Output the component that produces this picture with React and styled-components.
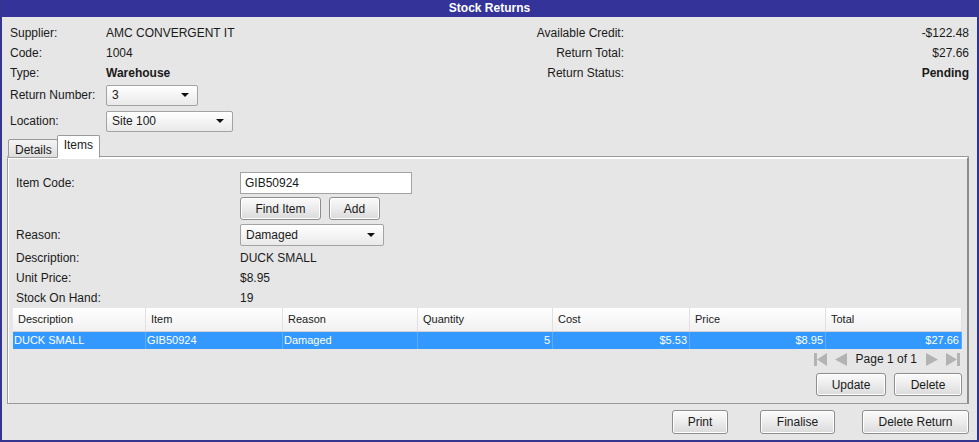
import React from "react";
import styled, { createGlobalStyle } from "styled-components";

const Global = createGlobalStyle`
  html, body { margin: 0; padding: 0; background: #e6e6e6; }
  body { font-family: "Liberation Sans", Arial, sans-serif; font-size: 12px; color: #1a1a1a; }
  * { box-sizing: border-box; }
`;

const Frame = styled.div`
  width: 979px;
  height: 442px;
  background: #e6e6e6;
  border-left: 2px solid #35358f;
  border-right: 2px solid #35358f;
  border-bottom: 2px solid #35358f;
  display: flex;
  flex-direction: column;
`;

const TitleBar = styled.div`
  height: 17px;
  background: #333399;
  color: #fff;
  font-weight: bold;
  font-size: 12px;
  line-height: 17px;
  text-align: center;
`;

const Body = styled.div`
  flex: 1;
  display: flex;
  flex-direction: column;
  padding: 6px 8px 0 5px;
`;

const Header = styled.div`
  display: flex;
  justify-content: space-between;
`;

const LeftInfo = styled.div`
  display: grid;
  grid-template-columns: 96px auto;
  grid-auto-rows: 20px;
  align-items: center;
  padding-left: 3px;
`;

const RightInfo = styled.div`
  display: grid;
  grid-template-columns: auto 345px;
  grid-auto-rows: 20px;
  align-items: center;
  text-align: right;
`;

const Label = styled.span`
  white-space: nowrap;
`;

const Value = styled.span`
  font-weight: ${(p) => (p.$bold ? "bold" : "normal")};
  white-space: nowrap;
`;

const SelectRow = styled.div`
  display: grid;
  grid-template-columns: 96px auto;
  align-items: center;
  height: 22px;
  padding-left: 3px;
  margin-top: ${(p) => p.$mt || 0}px;
`;

const SelectBox = styled.div`
  width: ${(p) => p.$w}px;
  height: ${(p) => p.$h || 21}px;
  border: 1px solid #a3a3a3;
  border-radius: 2px;
  background: linear-gradient(#ffffff, #e9e9e9);
  display: flex;
  align-items: center;
  justify-content: space-between;
  padding: 0 8px 0 5px;
  font-size: 12px;
`;

const Caret = styled.span`
  width: 0;
  height: 0;
  border-left: 4px solid transparent;
  border-right: 4px solid transparent;
  border-top: 4px solid #111;
`;

const Tabs = styled.div`
  display: flex;
  align-items: flex-end;
  height: 23px;
  margin-top: 3px;
  padding-left: 1px;
  position: relative;
  z-index: 1;
`;

const Tab = styled.div`
  height: ${(p) => (p.$active ? 23 : 19)}px;
  padding: ${(p) => (p.$active ? "2px 6px 0 6px" : "3px 5px 0 6px")};
  border: 1px solid #9a9a9a;
  border-bottom: ${(p) => (p.$active ? "1px solid #fff" : "1px solid #9a9a9a")};
  border-radius: 2px 2px 0 0;
  background: ${(p) => (p.$active ? "#ffffff" : "linear-gradient(#f4f4f4, #dedede)")};
  margin-right: ${(p) => (p.$active ? 0 : -1)}px;
  font-size: 12px;
  line-height: 15px;
`;

const Panel = styled.div`
  margin-top: -1px;
  height: 247px;
  border: 1px solid #9a9a9a;
  border-top-color: #ffffff;
  box-shadow: inset 1px 1px 0 #ffffff, 0 -1px 0 #9a9a9a;
  border-right: 2px solid #8c8c8c;
  display: flex;
  flex-direction: column;
  padding: 14px 6px 0 5px;
`;

const FormGrid = styled.div`
  display: grid;
  grid-template-columns: 224px auto;
  align-items: center;
  padding-left: 3px;
`;

const FormLabel = styled.span`
  height: ${(p) => p.$h || 20}px;
  line-height: ${(p) => p.$h || 20}px;
  margin-top: ${(p) => p.$mt || 0}px;
`;

const FormValue = styled.div`
  height: ${(p) => p.$h || 20}px;
  margin-top: ${(p) => p.$mt || 0}px;
  display: flex;
  align-items: center;
  gap: 8px;
`;

const TextInput = styled.div`
  width: 172px;
  height: 22px;
  background: #fff;
  border: 1px solid #a3a3a3;
  padding: 0 4px;
  display: flex;
  align-items: center;
`;

const Button = styled.div`
  width: ${(p) => p.$w}px;
  height: ${(p) => p.$h || 23}px;
  border: 1px solid #8e8e8e;
  border-radius: 3px;
  background: linear-gradient(#fbfbfb 0%, #ececec 50%, #dadada 100%);
  display: flex;
  align-items: center;
  justify-content: center;
  font-size: 12px;
  box-shadow: inset 0 0 0 1px #ffffff;
`;

const Table = styled.div`
  width: 949px;
  font-size: 11px;
`;

const cols = "133px 137px 135px 135px 137px 136px 136px";

const HeadRow = styled.div`
  display: grid;
  grid-template-columns: ${cols};
  height: 24px;
  background: linear-gradient(#ffffff, #f1f1f1);
  border-bottom: 1px solid #d2d2d2;
`;

const HeadCell = styled.div`
  padding-left: 5px;
  line-height: 23px;
  border-right: 1px solid #e0e0e0;
`;

const DataRow = styled.div`
  display: grid;
  grid-template-columns: ${cols};
  height: 17px;
  background: #3399ff;
  color: #fff;
`;

const DataCell = styled.div`
  line-height: 17px;
  padding: 0 2px 0 1px;
  text-align: ${(p) => (p.$right ? "right" : "left")};
  border-right: 1px solid #5aadff;
  white-space: nowrap;
`;

const Pager = styled.div`
  width: 949px;
  height: 18px;
  margin-top: 1px;
  display: flex;
  justify-content: flex-end;
  align-items: center;
  gap: 7px;
  padding-right: 2px;
  font-size: 12px;
`;

const PageText = styled.span`
  margin: 0 1px 0 1px;
`;

const PanelButtons = styled.div`
  width: 949px;
  display: flex;
  justify-content: flex-end;
  gap: 8px;
  margin-top: 5px;
`;

const Footer = styled.div`
  display: flex;
  justify-content: flex-end;
  align-items: center;
  margin-top: 6px;
`;

const FooterButton = styled(Button)`
  margin-left: ${(p) => p.$ml}px;
  height: 24px;
`;

const PagerIcon = ({ type }) => {
  const c = "#b3b3b3";
  if (type === "first")
    return (
      <svg width="13" height="13" viewBox="0 0 13 13">
        <rect x="0" y="0" width="3" height="13" fill={c} />
        <polygon points="13,0 13,13 3,6.5" fill={c} />
      </svg>
    );
  if (type === "prev")
    return (
      <svg width="14" height="13" viewBox="0 0 14 13">
        <polygon points="13,0 13,13 1,6.5" fill={c} />
      </svg>
    );
  if (type === "next")
    return (
      <svg width="14" height="13" viewBox="0 0 14 13">
        <polygon points="1,0 1,13 13,6.5" fill={c} />
      </svg>
    );
  return (
    <svg width="14" height="13" viewBox="0 0 14 13">
      <polygon points="0,0 0,13 11,6.5" fill={c} />
      <rect x="11" y="0" width="3" height="13" fill={c} />
    </svg>
  );
};

export default function App() {
  return (
    <>
      <Global />
      <Frame>
        <TitleBar>Stock Returns</TitleBar>
        <Body>
          <Header>
            <div>
              <LeftInfo>
                <Label>Supplier:</Label>
                <Value>AMC CONVERGENT IT</Value>
                <Label>Code:</Label>
                <Value>1004</Value>
                <Label>Type:</Label>
                <Value $bold>Warehouse</Value>
              </LeftInfo>
              <SelectRow $mt={1}>
                <Label>Return Number:</Label>
                <SelectBox $w={92}>
                  <span>3</span>
                  <Caret />
                </SelectBox>
              </SelectRow>
              <SelectRow $mt={4}>
                <Label>Location:</Label>
                <SelectBox $w={127}>
                  <span>Site 100</span>
                  <Caret />
                </SelectBox>
              </SelectRow>
            </div>
            <RightInfo>
              <Label>Available Credit:</Label>
              <Value>-$122.48</Value>
              <Label>Return Total:</Label>
              <Value>$27.66</Value>
              <Label>Return Status:</Label>
              <Value $bold>Pending</Value>
            </RightInfo>
          </Header>

          <Tabs>
            <Tab>Details</Tab>
            <Tab $active>Items</Tab>
          </Tabs>
          <Panel>
            <FormGrid>
              <FormLabel $h={22}>Item Code:</FormLabel>
              <FormValue $h={22}>
                <TextInput>GIB50924</TextInput>
              </FormValue>
              <span />
              <FormValue $h={23} $mt={3}>
                <Button $w={81}>Find Item</Button>
                <Button $w={51}>Add</Button>
              </FormValue>
              <FormLabel $h={22} $mt={4}>Reason:</FormLabel>
              <FormValue $h={22} $mt={4}>
                <SelectBox $w={144} $h={22}>
                  <span>Damaged</span>
                  <Caret />
                </SelectBox>
              </FormValue>
              <FormLabel $mt={2}>Description:</FormLabel>
              <FormValue $mt={2}>DUCK SMALL</FormValue>
              <FormLabel>Unit Price:</FormLabel>
              <FormValue>$8.95</FormValue>
              <FormLabel>Stock On Hand:</FormLabel>
              <FormValue>19</FormValue>
            </FormGrid>
            <Table>
              <HeadRow>
                <HeadCell>Description</HeadCell>
                <HeadCell>Item</HeadCell>
                <HeadCell>Reason</HeadCell>
                <HeadCell>Quantity</HeadCell>
                <HeadCell>Cost</HeadCell>
                <HeadCell>Price</HeadCell>
                <HeadCell>Total</HeadCell>
              </HeadRow>
              <DataRow>
                <DataCell>DUCK SMALL</DataCell>
                <DataCell>GIB50924</DataCell>
                <DataCell>Damaged</DataCell>
                <DataCell $right>5</DataCell>
                <DataCell $right>$5.53</DataCell>
                <DataCell $right>$8.95</DataCell>
                <DataCell $right>$27.66</DataCell>
              </DataRow>
            </Table>
            <Pager>
              <PagerIcon type="first" />
              <PagerIcon type="prev" />
              <PageText>Page 1 of 1</PageText>
              <PagerIcon type="next" />
              <PagerIcon type="last" />
            </Pager>
            <PanelButtons>
              <Button $w={70}>Update</Button>
              <Button $w={68}>Delete</Button>
            </PanelButtons>
          </Panel>
          <Footer>
            <FooterButton $w={56} $ml={0}>Print</FooterButton>
            <FooterButton $w={75} $ml={32}>Finalise</FooterButton>
            <FooterButton $w={107} $ml={27}>Delete Return</FooterButton>
          </Footer>
        </Body>
      </Frame>
    </>
  );
}
